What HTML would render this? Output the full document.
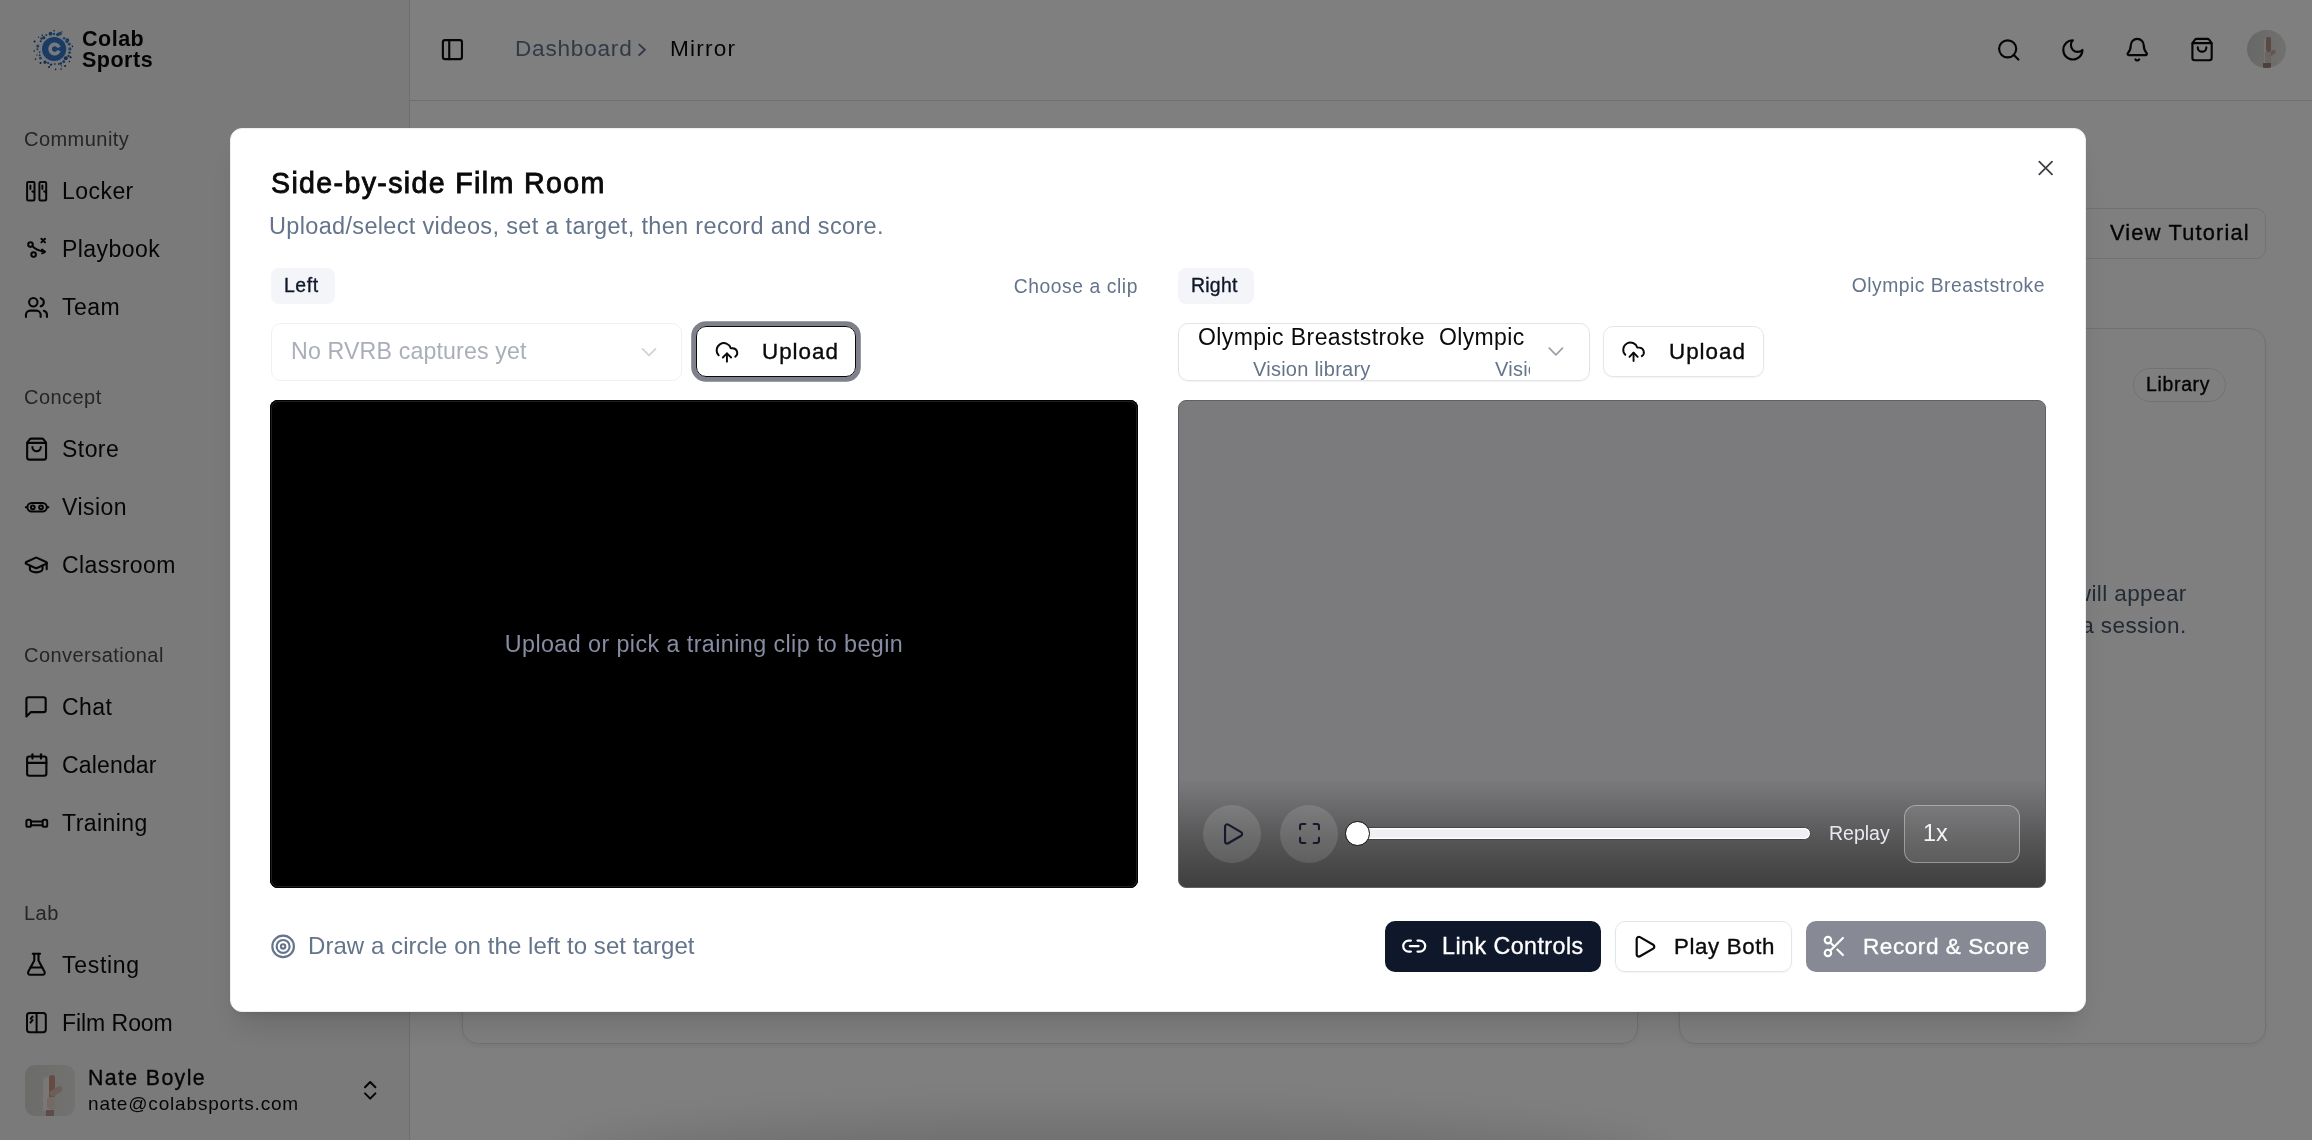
<!DOCTYPE html>
<html><head><meta charset="utf-8">
<style>
*{box-sizing:border-box;margin:0;padding:0}
html,body{width:2312px;height:1140px;overflow:hidden;background:#fff;font-family:"Liberation Sans",sans-serif;color:#09090b}
.a{position:absolute}
.t{position:absolute;white-space:nowrap;line-height:1;will-change:transform}
svg.ov{position:absolute;left:0;top:0;width:2312px;height:1140px;overflow:visible}
.lbl{font-size:20px;color:#4a4a50;letter-spacing:.46px}
.item{font-size:23px;color:#0a0a0a;letter-spacing:.45px}
.ic{fill:none;stroke-linecap:round;stroke-linejoin:round}
.ms{stroke-width:.35px;-webkit-text-stroke:.35px currentColor}
</style></head><body>

<!-- ============ BACKGROUND PAGE ============ -->
<div class="a" style="left:0;top:0;width:410.4px;height:1140px;background:#f4f4f7;border-right:1.4px solid #dcdce0"></div>
<div class="a" style="left:410px;top:99.5px;width:1902px;height:1.5px;background:#dedee2"></div>

<!-- logo -->
<svg class="ov" viewBox="0 0 2312 1140">
  <circle cx="54.1" cy="49" r="14.2" fill="#e8eff8"/>
  <circle cx="69.9" cy="48.9" r="1.6" fill="#3a7fd0"/><circle cx="69.6" cy="52.6" r="1.2" fill="#24589a"/><circle cx="68.5" cy="55.9" r="1.2" fill="#2f6cb8"/><circle cx="65.8" cy="58.2" r="1.9" fill="#24589a"/><circle cx="63.7" cy="61.6" r="1.6" fill="#3a7fd0"/><circle cx="60.7" cy="63.5" r="1.2" fill="#24589a"/><circle cx="58.8" cy="64.0" r="1.0" fill="#2f6cb8"/><circle cx="54.8" cy="64.1" r="1.0" fill="#3a7fd0"/><circle cx="51.0" cy="64.6" r="1.2" fill="#24589a"/><circle cx="48.1" cy="63.0" r="1.0" fill="#24589a"/><circle cx="45.0" cy="62.2" r="1.6" fill="#24589a"/><circle cx="40.5" cy="58.2" r="1.4" fill="#3a7fd0"/><circle cx="39.7" cy="55.2" r="1.0" fill="#2f6cb8"/><circle cx="39.6" cy="52.2" r="1.0" fill="#3a7fd0"/><circle cx="37.4" cy="49.3" r="1.0" fill="#2f6cb8"/><circle cx="37.8" cy="46.1" r="1.6" fill="#3a7fd0"/><circle cx="40.7" cy="41.2" r="1.0" fill="#24589a"/><circle cx="41.6" cy="38.6" r="1.4" fill="#3a7fd0"/><circle cx="43.8" cy="37.7" r="1.6" fill="#2f6cb8"/><circle cx="46.3" cy="34.9" r="1.0" fill="#2f6cb8"/><circle cx="50.5" cy="33.7" r="1.9" fill="#2f6cb8"/><circle cx="54.0" cy="34.0" r="1.2" fill="#3a7fd0"/><circle cx="57.7" cy="34.6" r="1.6" fill="#2f6cb8"/><circle cx="60.0" cy="33.6" r="1.9" fill="#3a7fd0"/><circle cx="64.1" cy="38.3" r="1.2" fill="#3a7fd0"/><circle cx="67.3" cy="40.1" r="1.9" fill="#2f6cb8"/><circle cx="67.0" cy="41.6" r="1.6" fill="#3a7fd0"/><circle cx="69.3" cy="44.2" r="1.4" fill="#3a7fd0"/><circle cx="70.5" cy="57.2" r="1.0" fill="#1d3c66"/><circle cx="42.3" cy="35.3" r="0.8" fill="#1d3c66"/><circle cx="40.5" cy="63.1" r="1.0" fill="#1d3c66"/><circle cx="34.2" cy="51.0" r="0.8" fill="#1d3c66"/><circle cx="61.7" cy="65.9" r="0.6" fill="#1d3c66"/><circle cx="61.9" cy="31.8" r="0.6" fill="#1d3c66"/><circle cx="65.1" cy="66.0" r="1.0" fill="#1d3c66"/><circle cx="61.1" cy="69.1" r="0.8" fill="#1d3c66"/><circle cx="38.6" cy="37.2" r="0.6" fill="#1d3c66"/><circle cx="69.4" cy="61.5" r="0.8" fill="#1d3c66"/><circle cx="55.6" cy="69.4" r="0.8" fill="#1d3c66"/><circle cx="35.5" cy="59.1" r="0.8" fill="#1d3c66"/><circle cx="49.1" cy="66.9" r="1.0" fill="#1d3c66"/><circle cx="72.4" cy="46.4" r="0.8" fill="#1d3c66"/><circle cx="34.6" cy="41.4" r="1.0" fill="#1d3c66"/><circle cx="70.8" cy="57.4" r="0.6" fill="#1d3c66"/><circle cx="54.0" cy="30.8" r="0.8" fill="#1d3c66"/><circle cx="36.9" cy="55.1" r="0.6" fill="#1d3c66"/>
  <circle cx="54.1" cy="49" r="12.1" fill="#3578c8"/>
  <path d="M59 47.4 A4.6 4.6 0 1 0 59 50.6" fill="none" stroke="#f0f5fb" stroke-width="3.6"/>
</svg>
<div class="t" style="left:81.5px;top:29.3px;font-size:21.5px;font-weight:700;line-height:21px;letter-spacing:.5px">Colab<br>Sports</div>

<!-- sidebar labels & items -->
<div class="t lbl" style="left:23.5px;top:129.1px">Community</div>
<div class="t item" style="left:62.3px;top:179.8px">Locker</div>
<div class="t item" style="left:62.3px;top:237.8px">Playbook</div>
<div class="t item" style="left:62.3px;top:295.8px">Team</div>
<div class="t lbl" style="left:23.5px;top:387.1px">Concept</div>
<div class="t item" style="left:62.3px;top:437.8px">Store</div>
<div class="t item" style="left:62.3px;top:495.8px">Vision</div>
<div class="t item" style="left:62.3px;top:553.8px">Classroom</div>
<div class="t lbl" style="left:23.5px;top:645.1px">Conversational</div>
<div class="t item" style="left:62.3px;top:695.8px">Chat</div>
<div class="t item" style="left:62.3px;top:753.8px;letter-spacing:.16px">Calendar</div>
<div class="t item" style="left:62.3px;top:811.8px">Training</div>
<div class="t lbl" style="left:23.5px;top:903.1px">Lab</div>
<div class="t item" style="left:62.3px;top:953.8px;letter-spacing:.7px">Testing</div>
<div class="t item" style="left:62.3px;top:1011.8px;letter-spacing:-.05px">Film Room</div>

<!-- sidebar icons -->
<svg class="ov" viewBox="0 0 2312 1140">
  <g class="ic" stroke-width="2" stroke="#0a0a0a">
    <!-- locker -->
    <rect x="27.1" y="182" width="7.4" height="18.6" rx="1.3"/>
    <rect x="39.4" y="182" width="6.8" height="18.6" rx="1.3"/>
    <path d="M30.4 185.6v3.4M32.4 191.4l.9.5M42.4 185.6v3.4M44.2 191.4l.9.5"/>
    <!-- playbook -->
    <circle cx="30.5" cy="244.6" r="2.3"/>
    <circle cx="33.6" cy="254.6" r="2.3"/>
    <path d="M41.4 238.8l3.6 3.6M45 238.8l-3.6 3.6"/>
    <path d="M32.6 246.3c3 3.6 7 4.5 12.4 5.6M42 249.6l3 2.3-2.8 1.4"/>
    <!-- team (lucide users) -->
    <g transform="translate(23.85 294.9) scale(1.05)"><path d="M16 21v-2a4 4 0 0 0-4-4H6a4 4 0 0 0-4 4v2"/><circle cx="9" cy="7" r="4"/><path d="M22 21v-2a4 4 0 0 0-3-3.87"/><path d="M16 3.13a4 4 0 0 1 0 7.75"/></g>
    <!-- store (shopping bag) -->
    <g transform="translate(24 436.5) scale(1.05)"><path d="M16 10a4 4 0 0 1-8 0"/><path d="M3.103 6.034h17.794"/><path d="M3.4 5.467a2 2 0 0 0-.4 1.2V20a2 2 0 0 0 2 2h14a2 2 0 0 0 2-2V6.667a2 2 0 0 0-.4-1.2l-2-2.667A2 2 0 0 0 17 2H7a2 2 0 0 0-1.6.8z"/></g>
    <!-- vision -->
    <rect x="27.4" y="503" width="19.4" height="8.6" rx="4.3"/>
    <circle cx="32.8" cy="507.3" r="1.9"/><circle cx="41" cy="507.3" r="1.9"/>
    <path d="M25.8 507.3h1.4M47 507.3h1.4"/>
    <!-- classroom (graduation cap) -->
    <g transform="translate(23.6 552.4) scale(1.05)"><path d="M21.42 10.922a1 1 0 0 0-.019-1.838L12.83 5.18a2 2 0 0 0-1.66 0L2.6 9.08a1 1 0 0 0 0 1.832l8.57 3.908a2 2 0 0 0 1.66 0z"/><path d="M22 10v6"/><path d="M6 12.5V16a6 3 0 0 0 12 0v-3.5"/></g>
    <!-- chat -->
    <g transform="translate(23.2 694) scale(1.07)"><path d="M21 15a2 2 0 0 1-2 2H7l-4 4V5a2 2 0 0 1 2-2h14a2 2 0 0 1 2 2z"/></g>
    <!-- calendar -->
    <g transform="translate(23.9 752.2) scale(1.07)"><path d="M8 2v4"/><path d="M16 2v4"/><rect width="18" height="18" x="3" y="4" rx="2"/><path d="M3 10h18"/></g>
    <!-- training -->
    <rect x="26.4" y="819.8" width="4.6" height="7" rx="1.6"/>
    <rect x="42.6" y="819.8" width="4.6" height="7" rx="1.6"/>
    <path d="M31 821.4h11.6M31 825.2h11.6"/>
    <!-- testing (flask) -->
    <g transform="translate(23.8 951.7) scale(1.05)"><path d="M14 2v6a2 2 0 0 0 .245.96l5.51 10.08A2 2 0 0 1 18 22H6a2 2 0 0 1-1.755-2.96l5.51-10.08A2 2 0 0 0 10 8V2"/><path d="M6.453 15h11.094"/><path d="M8.5 2h7"/></g>
    <!-- film room -->
    <rect x="27" y="1013" width="18.8" height="19.2" rx="2.6"/>
    <path d="M36.6 1013v19.2M32.6 1016.5l-1.8 2.2M32.6 1020l-2.2 2.6"/>
    <!-- chevrons up-down -->
    <path d="M365 1087.2l5.2-5.2 5.2 5.2M365 1093.4l5.2 5.2 5.2-5.2"/>
  </g>
</svg>

<!-- user -->
<div class="a" style="left:24.5px;top:1065px;width:50px;height:50.5px;border-radius:10px;background:linear-gradient(90deg,#d8dad6,#e4e6e2);overflow:hidden">
  <div class="a" style="left:18px;top:12px;width:7.5px;height:34px;background:#f3f0ec;border-radius:4px 2px 0 0"></div>
  <div class="a" style="left:24.4px;top:9.7px;width:5.8px;height:22px;background:#c99688;border-radius:3px 3px 1px 1px"></div>
  <div class="a" style="left:25px;top:27px;width:14px;height:6px;background:#dcbcb0;border-radius:3px;transform:rotate(-32deg);transform-origin:0 50%"></div>
  <div class="a" style="left:22px;top:32px;width:8px;height:12px;background:#e6d4cc;border-radius:2px"></div>
  <div class="a" style="left:21px;top:44.5px;width:8.4px;height:6px;background:#b89a90"></div>
</div>
<div class="t ms" style="left:87.7px;top:1068.0px;font-size:21.3px;letter-spacing:1.38px;color:#0a0a0a">Nate Boyle</div>
<div class="t" style="left:88px;top:1093.8px;font-size:19px;letter-spacing:.82px;color:#0a0a0a">nate@colabsports.com</div>

<!-- header -->
<div class="t" style="left:515px;top:37.7px;font-size:22.6px;letter-spacing:.77px;color:#64748b">Dashboard</div>
<div class="t" style="left:669.5px;top:37.7px;font-size:22.6px;letter-spacing:1.2px;color:#0a0a0a">Mirror</div>
<svg class="ov" viewBox="0 0 2312 1140">
  <g class="ic" stroke-width="2" stroke="#0a0a0a">
    <path d="M639.3 44.6l5.6 5.2-5.6 5.2" stroke="#64748b" stroke-width="1.9"/>
    <g transform="translate(439.7 36.9) scale(1.06)"><rect width="18" height="18" x="3" y="3" rx="2"/><path d="M9 3v18"/></g>
    <g transform="translate(1995.9 37.1) scale(1.07)"><circle cx="11" cy="11" r="8"/><path d="m21 21-4.3-4.3"/></g>
    <g transform="translate(2060.1 37.1) scale(1.065)"><path d="M12 3a6 6 0 0 0 9 9 9 9 0 1 1-9-9Z"/></g>
    <g transform="translate(2124.3 36.7) scale(1.08)"><path d="M10.268 21a2 2 0 0 0 3.464 0"/><path d="M3.262 15.326A1 1 0 0 0 4 17h16a1 1 0 0 0 .74-1.673C19.41 13.956 18 12.499 18 8A6 6 0 0 0 6 8c0 4.499-1.411 5.956-2.738 7.326"/></g>
    <g transform="translate(2189.2 36.7) scale(1.07)"><path d="M16 10a4 4 0 0 1-8 0"/><path d="M3.103 6.034h17.794"/><path d="M3.4 5.467a2 2 0 0 0-.4 1.2V20a2 2 0 0 0 2 2h14a2 2 0 0 0 2-2V6.667a2 2 0 0 0-.4-1.2l-2-2.667A2 2 0 0 0 17 2H7a2 2 0 0 0-1.6.8z"/></g>
  </g>
</svg>
<div class="a" style="left:2247.2px;top:29.7px;width:38.4px;height:38.4px;border-radius:50%;background:linear-gradient(90deg,#cfd2cd,#e2e3e0);overflow:hidden">
  <div class="a" style="left:16.5px;top:9px;width:3.5px;height:25px;background:#eeeae6"></div>
  <div class="a" style="left:18.7px;top:7px;width:4.8px;height:15px;background:#b89088;border-radius:2px"></div>
  <div class="a" style="left:21px;top:24px;width:9px;height:4px;background:#c8aaa0;border-radius:2px;transform:rotate(-35deg);transform-origin:0 50%"></div>
  <div class="a" style="left:18px;top:22px;width:6px;height:11px;background:#d8c8c0"></div>
  <div class="a" style="left:15.6px;top:33.8px;width:8px;height:5px;background:#9a7e76"></div>
</div>

<!-- page content behind -->
<div class="a" style="left:2060px;top:208px;width:205.5px;height:50.5px;border:1.5px solid #e4e4e7;border-radius:10px;background:#fff"></div>
<div class="t ms" style="left:2109.9px;top:222.3px;font-size:21.8px;letter-spacing:1.19px">View Tutorial</div>
<div class="a" style="left:462px;top:328px;width:1176px;height:716px;border:1.5px solid #e2e2e5;border-radius:16px;box-shadow:0 2px 5px rgba(0,0,0,0.06)"></div>
<div class="a" style="left:1679px;top:328px;width:586.5px;height:716px;border:1.5px solid #e2e2e5;border-radius:16px;box-shadow:0 2px 5px rgba(0,0,0,0.06)"></div>
<div class="a" style="left:2133px;top:367.5px;width:92.5px;height:34.5px;border:1.5px solid #e4e4e7;border-radius:17px"></div>
<div class="t ms" style="left:2146.1px;top:375.3px;font-size:19.4px;letter-spacing:0.70px">Library</div>
<div class="t" style="right:125px;top:582.9px;font-size:22.5px;color:#475569;letter-spacing:.4px;text-align:right">Your recorded sessions will appear</div>
<div class="t" style="right:125px;top:615.1px;font-size:22.5px;color:#475569;letter-spacing:.4px;text-align:right">here once you record a session.</div>

<!-- ============ OVERLAY ============ -->
<div class="a" style="left:0;top:0;width:2312px;height:1140px;background:rgba(0,0,0,0.5)"></div>
<div class="a" style="left:560px;top:1118px;width:1100px;height:90px;border-radius:50%;background:rgba(0,0,0,0.13);filter:blur(22px)"></div>

<!-- ============ MODAL ============ -->
<div class="a" style="left:230px;top:128px;width:1856px;height:884px;background:#fff;border:1px solid #eceef1;border-radius:12px;box-shadow:0 20px 30px -6px rgba(0,0,0,0.12),0 8px 12px -8px rgba(0,0,0,0.14)"></div>

<div class="t" style="left:270.6px;top:169px;font-size:28.6px;font-weight:400;-webkit-text-stroke:.85px #0a0a0a;letter-spacing:1.34px;color:#0a0a0a">Side-by-side Film Room</div>
<div class="t" style="left:269.2px;top:214.8px;font-size:23.5px;letter-spacing:.33px;color:#64748b">Upload/select videos, set a target, then record and score.</div>

<svg class="ov" viewBox="0 0 2312 1140"><path class="ic" d="M2039.3 161.7L2052 174.4M2052 161.7L2039.3 174.4" stroke="#3f3f46" stroke-width="1.8"/></svg>

<!-- left column header -->
<div class="a" style="left:271px;top:268px;width:64px;height:36px;border-radius:8px;background:#f3f5f8"></div>
<div class="t ms" style="left:284.2px;top:276.0px;font-size:19.4px;color:#0f172a;letter-spacing:0.57px">Left</div>
<div class="t" style="left:838px;width:300px;top:276.5px;font-size:19.3px;letter-spacing:.57px;color:#64748b;text-align:right">Choose a clip</div>

<!-- right column header -->
<div class="a" style="left:1178px;top:268px;width:76px;height:36px;border-radius:8px;background:#f3f5f8"></div>
<div class="t ms" style="left:1191.1px;top:275.6px;font-size:19.4px;color:#0f172a;letter-spacing:0.28px">Right</div>
<div class="t" style="left:1745px;width:300px;top:275.5px;font-size:19.3px;letter-spacing:.5px;color:#64748b;text-align:right">Olympic Breaststroke</div>

<!-- left select -->
<div class="a" style="left:271px;top:323px;width:411px;height:57.5px;border:1.5px solid #eef0f3;border-radius:10px"></div>
<div class="t" style="left:290.7px;top:340.4px;font-size:23.2px;letter-spacing:.14px;color:#a9aeb8">No RVRB captures yet</div>
<svg class="ov" viewBox="0 0 2312 1140"><path class="ic" d="M642.5 348.8l6.5 6.5 6.5-6.5" stroke="#d0d2d6" stroke-width="1.7"/></svg>

<!-- left upload (focused) -->
<div class="a" style="left:696px;top:326px;width:160px;height:51px;border:1.4px solid #0a0a0a;border-radius:10px;box-shadow:0 0 0 4.8px #7e8189"></div>
<div class="t ms" style="left:762.2px;top:340.7px;font-size:22.4px;letter-spacing:1.00px;color:#0a0a0a">Upload</div>

<!-- right select -->
<div class="a" style="left:1178px;top:323px;width:411.5px;height:57.5px;border:1.5px solid #e0e4ea;border-radius:10px;box-shadow:0 1px 2px rgba(0,0,0,0.05)"></div>
<div class="t" style="left:1198.3px;top:325.7px;font-size:23px;letter-spacing:.42px;color:#0a0a0a">Olympic Breaststroke</div>
<div class="t" style="left:1253px;top:358.8px;font-size:20px;letter-spacing:.25px;color:#64748b">Vision library</div>
<div class="a" style="left:1420px;top:324px;width:110px;height:56px;overflow:hidden">
  <div class="t" style="left:18.6px;top:1.7px;font-size:23px;letter-spacing:.35px;color:#0a0a0a">Olympic</div>
  <div class="t" style="left:74.5px;top:34.8px;font-size:20px;letter-spacing:.25px;color:#64748b">Vision library</div>
</div>
<svg class="ov" viewBox="0 0 2312 1140"><path class="ic" d="M1549.3 348.2l6.6 6.6 6.6-6.6" stroke="#9aa0aa" stroke-width="1.7"/></svg>

<!-- right upload -->
<div class="a" style="left:1603px;top:326px;width:160.5px;height:51px;border:1.5px solid #e2e5ea;border-radius:10px;box-shadow:0 1px 2px rgba(0,0,0,0.05)"></div>
<div class="t ms" style="left:1669.2px;top:340.7px;font-size:22.4px;letter-spacing:1.00px;color:#0a0a0a">Upload</div>

<svg class="ov" viewBox="0 0 2312 1140">
  <g class="ic" stroke="#0a0a0a" stroke-width="1.85">
    <g transform="translate(714.6 340) scale(1.03)"><path d="M12 13v8"/><path d="M4 14.899A7 7 0 1 1 15.71 8h1.790a4.5 4.5 0 0 1 2.5 8.242"/><path d="m8 17 4-4 4 4"/></g>
    <g transform="translate(1621.2 339.4) scale(1.03)"><path d="M12 13v8"/><path d="M4 14.899A7 7 0 1 1 15.71 8h1.790a4.5 4.5 0 0 1 2.5 8.242"/><path d="m8 17 4-4 4 4"/></g>
  </g>
</svg>

<!-- left video -->
<div class="a" style="left:270px;top:400px;width:868px;height:488px;background:#000;border-radius:8px;box-shadow:inset 0 0 0 1px #000,inset 0 0 0 2px #1e1e1e"></div>
<div class="t" style="left:270px;width:868px;top:632.8px;font-size:23.3px;letter-spacing:.42px;color:#878ca3;text-align:center">Upload or pick a training clip to begin</div>

<!-- right video -->
<div class="a" style="left:1177.5px;top:400px;width:868px;height:488px;border-radius:8px;overflow:hidden;background:#7b7b7d;border:1px solid #606164">
  <div class="a" style="left:0;top:378px;width:868px;height:110px;background:linear-gradient(to top,rgba(0,0,0,0.5),rgba(0,0,0,0.3) 45%,rgba(0,0,0,0))"></div>
</div>
<div class="a" style="left:1203px;top:805px;width:58px;height:58px;border-radius:50%;background:rgba(255,255,255,0.12)"></div>
<div class="a" style="left:1280px;top:805px;width:58px;height:58px;border-radius:50%;background:rgba(255,255,255,0.12)"></div>
<div class="a" style="left:1352px;top:827px;width:459px;height:12.6px;border-radius:7px;background:#eef0f3;border:1px solid #454548;box-shadow:inset 0 0 0 1.2px #fff"></div>
<div class="a" style="left:1345.1px;top:821px;width:24.9px;height:24.9px;border-radius:50%;background:#fff;border:1.5px solid #0b0b0b"></div>
<div class="t" style="left:1828.8px;top:823.5px;font-size:19.5px;color:#e8e9ec">Replay</div>
<div class="a" style="left:1904px;top:805px;width:116px;height:58px;border-radius:12px;border:1.5px solid rgba(255,255,255,0.36);background:rgba(255,255,255,0.1)"></div>
<div class="t" style="left:1923.4px;top:821.9px;font-size:23.5px;color:#f3f4f6">1x</div>
<svg class="ov" viewBox="0 0 2312 1140">
  <g class="ic" stroke="#141a2c" stroke-width="2">
    <g transform="translate(1219.7 821.1) scale(1.07)"><path d="M5 5a2 2 0 0 1 3.008-1.728l11.997 6.998a2 2 0 0 1 .003 3.458l-12 7A2 2 0 0 1 5 19z"/></g>
    <g transform="translate(1296.9 820.9) scale(1.05)"><path d="M8 3H5a2 2 0 0 0-2 2v3"/><path d="M21 8V5a2 2 0 0 0-2-2h-3"/><path d="M3 16v3a2 2 0 0 0 2 2h3"/><path d="M16 21h3a2 2 0 0 0 2-2v-3"/></g>
  </g>
  <path class="ic" d="M1988 830l4.5 4.5 4.5-4.5" stroke="rgba(100,110,120,0.35)" stroke-width="1.6"/>
</svg>

<!-- bottom bar -->
<svg class="ov" viewBox="0 0 2312 1140">
  <g class="ic" stroke="#64748b" stroke-width="2">
    <g transform="translate(270.2 933.5) scale(1.077)"><circle cx="12" cy="12" r="10"/><circle cx="12" cy="12" r="6"/><circle cx="12" cy="12" r="2"/></g>
  </g>
</svg>
<div class="t" style="left:308.3px;top:934.3px;font-size:24px;letter-spacing:.06px;color:#64748b">Draw a circle on the left to set target</div>

<div class="a" style="left:1385px;top:921px;width:216px;height:51px;border-radius:10px;background:#0f172a"></div>
<div class="t ms" style="left:1441.9px;top:935.2px;font-size:23.2px;letter-spacing:0.49px;color:#fff">Link Controls</div>
<div class="a" style="left:1615px;top:921px;width:177px;height:51px;border-radius:10px;border:1.5px solid #e2e5ea;box-shadow:0 1px 2px rgba(0,0,0,0.05)"></div>
<div class="t ms" style="left:1674.2px;top:935.5px;font-size:22.3px;letter-spacing:0.63px;color:#0a0a0a">Play Both</div>
<div class="a" style="left:1806px;top:921px;width:240px;height:51px;border-radius:10px;background:#878a94"></div>
<div class="t ms" style="left:1863.2px;top:935.6px;font-size:22.6px;letter-spacing:0.53px;color:#fff">Record &amp; Score</div>
<svg class="ov" viewBox="0 0 2312 1140">
  <g class="ic" stroke="#0a0a0a" stroke-width="2">
    <g stroke="#fff"><g transform="translate(1401 932.9) scale(1.1)"><path d="M9 17H7A5 5 0 0 1 7 7h2"/><path d="M15 7h2a5 5 0 1 1 0 10h-2"/><line x1="8" x2="16" y1="12" y2="12"/></g></g>
    <g transform="translate(1631.2 933.5) scale(1.1)" stroke="#0a0a0a"><path d="M5 5a2 2 0 0 1 3.008-1.728l11.997 6.998a2 2 0 0 1 .003 3.458l-12 7A2 2 0 0 1 5 19z"/></g>
    <g stroke="#fff"><g transform="translate(1821.5 933.7) scale(1.07)"><circle cx="6" cy="6" r="3"/><path d="M8.12 8.12 12 12"/><path d="M20 4 8.12 15.88"/><circle cx="6" cy="18" r="3"/><path d="M14.8 14.8 20 20"/></g></g>
  </g>
</svg>

</body></html>
